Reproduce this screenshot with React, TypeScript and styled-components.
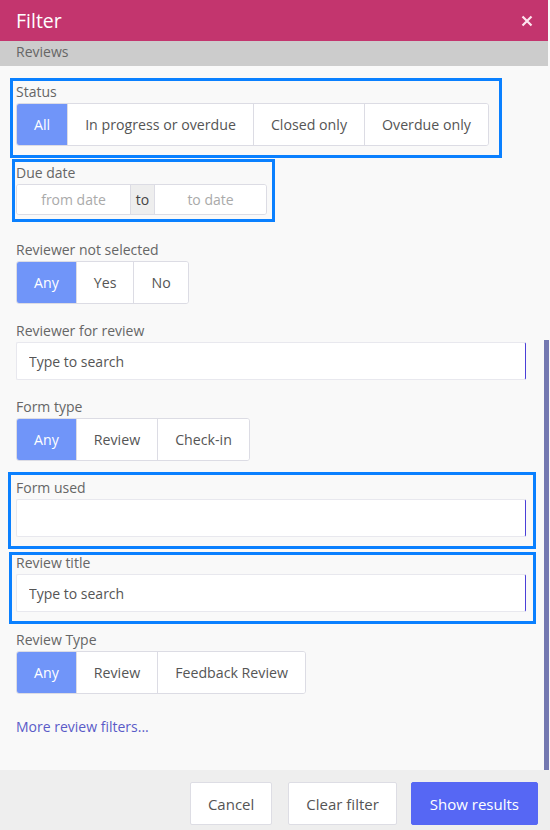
import React from 'react';
import styled, { createGlobalStyle } from 'styled-components';

const GlobalStyle = createGlobalStyle`
  html, body {
    margin: 0;
    padding: 0;
    background: #f3f3f3;
  }
  * {
    box-sizing: border-box;
  }
`;

const Modal = styled.div`
  width: 550px;
  height: 830px;
  display: flex;
  flex-direction: column;
  overflow: hidden;
  font-family: 'Open Sans', 'Noto Sans', sans-serif;
  background: #f9f9f9;
`;

const Header = styled.div`
  height: 41px;
  flex-shrink: 0;
  margin-right: 2px;
  background: #c3356e;
  display: flex;
  align-items: center;
  justify-content: space-between;
  padding: 0 15px 0 16px;
`;

const Title = styled.h2`
  margin: 0;
  font-size: 19.5px;
  font-weight: 400;
  color: #fff;
  line-height: 1;
`;

const CloseButton = styled.button`
  border: none;
  background: transparent;
  padding: 0;
  display: flex;
  cursor: pointer;
`;

const Body = styled.div`
  position: relative;
  flex: 1;
  overflow: hidden;
`;

const SectionBar = styled.div`
  height: 25px;
  margin-right: 2px;
  background: #cccccc;
  color: #666;
  font-size: 14px;
  line-height: 21px;
  padding-left: 16px;
`;

const Content = styled.div`
  padding: 16px 24px 0 16px;
`;

const Field = styled.div<{ $extra?: number }>`
  position: relative;
  margin-bottom: ${(p) => 17 + (p.$extra || 0)}px;
`;

const Highlight = styled.span<{ $t: number; $l: number; $r: number; $b: number }>`
  position: absolute;
  top: ${(p) => p.$t}px;
  left: ${(p) => p.$l}px;
  right: ${(p) => p.$r}px;
  bottom: ${(p) => p.$b}px;
  border: 3px solid #0a80ff;
  pointer-events: none;
`;

const Label = styled.div`
  font-size: 14px;
  line-height: 20px;
  color: #666;
  margin-bottom: 1px;
`;

const Segmented = styled.div`
  display: inline-flex;
  height: 43px;
  background: #fff;
  border: 1px solid #dcdce4;
  border-radius: 3px;
  overflow: hidden;
`;

const Segment = styled.button<{ $active?: boolean }>`
  font-family: inherit;
  font-size: 14.2px;
  border: none;
  border-right: 1px solid #dcdce4;
  padding: 0 17px;
  background: ${(p) => (p.$active ? '#7095f9' : '#fff')};
  color: ${(p) => (p.$active ? '#fff' : '#555')};
  cursor: pointer;
  &:last-child {
    border-right: none;
  }
`;

const DateGroup = styled.div`
  display: inline-flex;
  height: 31px;
  border: 1px solid #dcdce4;
  border-radius: 3px;
  background: #fff;
  overflow: hidden;
`;

const DateInput = styled.input<{ $w: number }>`
  width: ${(p) => p.$w}px;
  border: none;
  outline: none;
  font-family: inherit;
  font-size: 14px;
  text-align: center;
  color: #444;
  background: #fff;
  &::placeholder {
    color: #aaa;
  }
`;

const Addon = styled.span`
  display: flex;
  align-items: center;
  justify-content: center;
  width: 25px;
  font-size: 14px;
  color: #444;
  background: #eeeeee;
  border-left: 1px solid #dcdce4;
  border-right: 1px solid #dcdce4;
`;

const TextInput = styled.input`
  display: block;
  width: 100%;
  height: 38px;
  border: 1px solid #e8e8ee;
  border-right: 1px solid #4a3fd8;
  border-radius: 2px;
  outline: none;
  background: #fff;
  padding: 0 12px;
  font-family: inherit;
  font-size: 14px;
  color: #444;
  &::placeholder {
    color: #555;
  }
`;

const MoreLink = styled.a`
  display: inline-block;
  margin-top: 6px;
  font-size: 14px;
  line-height: 20px;
  color: #5a5bc8;
  text-decoration: none;
  cursor: pointer;
`;

const ScrollThumb = styled.div`
  position: absolute;
  right: 1px;
  top: 299px;
  bottom: 0;
  width: 5px;
  background: #7479b1;
`;

const Footer = styled.div`
  height: 60px;
  flex-shrink: 0;
  background: #eeeeee;
  display: flex;
  justify-content: flex-end;
  align-items: flex-start;
  padding: 12px 12px 0 0;
`;

const FooterButton = styled.button<{ $primary?: boolean; $gap?: number }>`
  height: 43px;
  padding: 0 ${(p) => (p.$primary ? 18 : 17)}px;
  margin-left: ${(p) => p.$gap || 0}px;
  font-family: inherit;
  font-size: 15px;
  border-radius: 2px;
  border: 1px solid ${(p) => (p.$primary ? '#5667f4' : '#dddde4')};
  background: ${(p) => (p.$primary ? '#5667f4' : '#fff')};
  color: ${(p) => (p.$primary ? '#fff' : '#555')};
  cursor: pointer;
`;

interface ChoiceProps {
  options: string[];
  active?: number;
}

const Choice: React.FC<ChoiceProps> = ({ options, active = 0 }) => (
  <Segmented>
    {options.map((o, i) => (
      <Segment key={o} $active={i === active}>
        {o}
      </Segment>
    ))}
  </Segmented>
);

const App: React.FC = () => {
  return (
    <>
      <GlobalStyle />
      <Modal>
        <Header>
          <Title>Filter</Title>
          <CloseButton aria-label="Close">
            <svg width="12" height="12" viewBox="0 0 12 12">
              <path d="M1.5 1.5L10.5 10.5M10.5 1.5L1.5 10.5" stroke="#fde6ef" strokeWidth="2.2" />
            </svg>
          </CloseButton>
        </Header>
        <Body>
          <SectionBar>Reviews</SectionBar>
          <Content>
            <Field>
              <Highlight $t={-4} $l={-6} $r={24} $b={-12} />
              <Label>Status</Label>
              <Choice options={['All', 'In progress or overdue', 'Closed only', 'Overdue only']} />
            </Field>
            <Field $extra={8}>
              <Highlight $t={-4} $l={-4} $r={251} $b={-7} />
              <Label>Due date</Label>
              <DateGroup>
                <DateInput $w={113} placeholder="from date" />
                <Addon>to</Addon>
                <DateInput $w={111} placeholder="to date" />
              </DateGroup>
            </Field>
            <Field>
              <Label>Reviewer not selected</Label>
              <Choice options={['Any', 'Yes', 'No']} />
            </Field>
            <Field>
              <Label>Reviewer for review</Label>
              <TextInput placeholder="Type to search" />
            </Field>
            <Field>
              <Label>Form type</Label>
              <Choice options={['Any', 'Review', 'Check-in']} />
            </Field>
            <Field $extra={-1}>
              <Highlight $t={-6} $l={-8} $r={-10} $b={-12} />
              <Label>Form used</Label>
              <TextInput />
            </Field>
            <Field $extra={1}>
              <Highlight $t={-1} $l={-7} $r={-10} $b={-12} />
              <Label>Review title</Label>
              <TextInput placeholder="Type to search" />
            </Field>
            <Field>
              <Label>Review Type</Label>
              <Choice options={['Any', 'Review', 'Feedback Review']} />
            </Field>
            <MoreLink>More review filters...</MoreLink>
          </Content>
          <ScrollThumb />
        </Body>
        <Footer>
          <FooterButton>Cancel</FooterButton>
          <FooterButton $gap={16}>Clear filter</FooterButton>
          <FooterButton $gap={14} $primary>Show results</FooterButton>
        </Footer>
      </Modal>
    </>
  );
};

export default App;
